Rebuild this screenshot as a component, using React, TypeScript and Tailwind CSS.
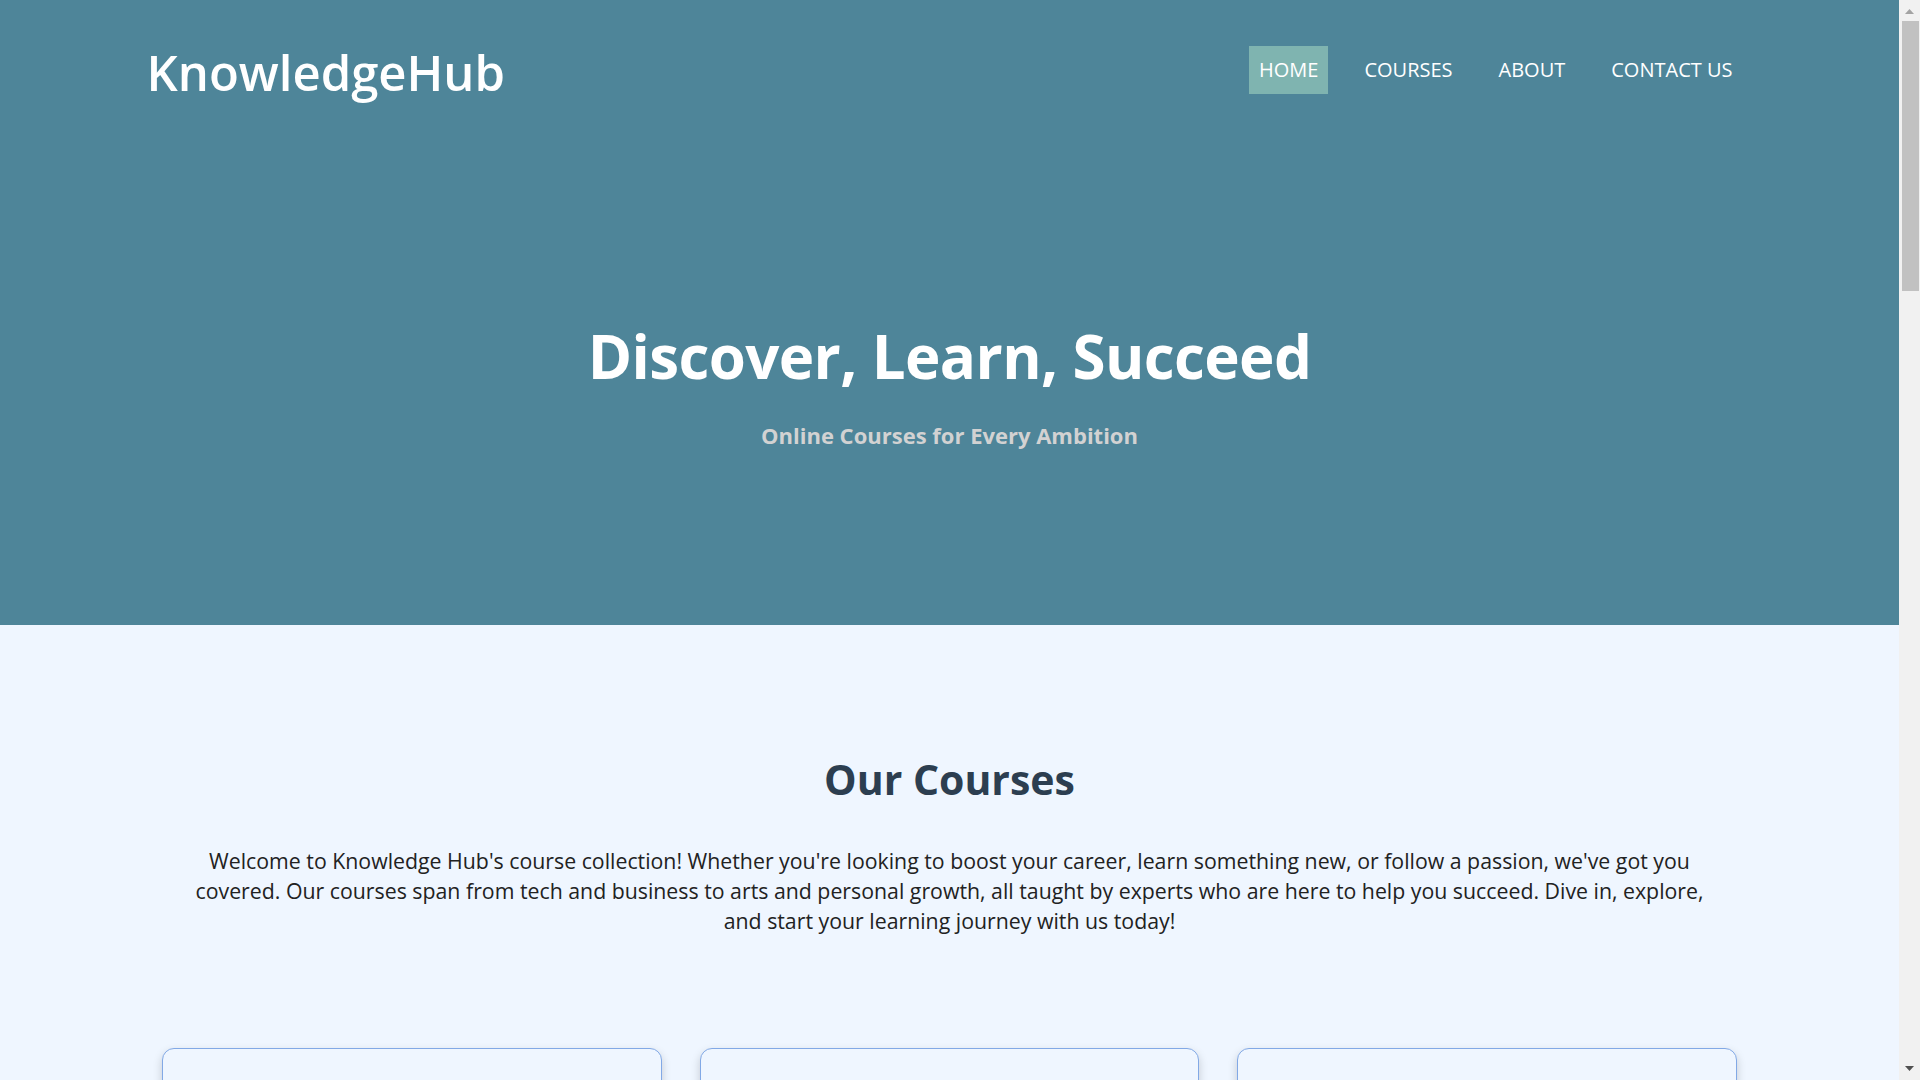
import React from "react";

const navLinks = ["HOME", "COURSES", "ABOUT", "CONTACT US"];

function Scrollbar() {
  return (
    <div className="w-[21px] h-screen shrink-0 bg-[#f1f1f1] flex flex-col items-center">
      <svg className="mt-[9px]" width="9" height="5" viewBox="0 0 9 5">
        <path d="M4.5 0 L9 5 L0 5 Z" fill="#a3a3a3" />
      </svg>
      <div className="mt-[7px] ml-[1px] w-[17px] h-[270px] bg-[#c1c1c1]" />
      <div className="flex-1" />
      <svg className="mb-[9px]" width="9" height="5" viewBox="0 0 9 5">
        <path d="M0 0 L9 0 L4.5 5 Z" fill="#505050" />
      </svg>
    </div>
  );
}

export default function App() {
  return (
    <div className="h-screen flex overflow-hidden font-['Open_Sans',sans-serif]">
      <main className="flex-1 overflow-hidden bg-[#eff6ff]">
        <section className="bg-[#4e8599] h-[625px] flex flex-col">
          <header className="w-[1600px] mx-auto flex justify-between items-center pt-[36px]">
            <h1 className="text-[49px] font-semibold text-white leading-[64px] -ml-[3px] mt-[4px]">
              KnowledgeHub
            </h1>
            <ul className="flex items-center gap-[26px] mr-[7px]">
              {navLinks.map((link, i) => (
                <li key={link}>
                  <a
                    href="#"
                    className={
                      i === 0
                        ? "block px-[10px] py-[10px] text-[20px] leading-[28px] text-white bg-[#7fb4b0]"
                        : "block px-[10px] py-[10px] text-[20px] leading-[28px] text-white"
                    }
                  >
                    {link}
                  </a>
                </li>
              ))}
            </ul>
          </header>

          <div className="flex flex-col items-center mt-[212px]">
            <h2 className="text-[60px] font-bold text-white leading-[80px] tracking-[-0.01em]">
              Discover, Learn, Succeed
            </h2>
            <p className="mt-[23px] text-[22px] leading-[33px] font-bold text-[#d2d2d2]">
              Online Courses for Every Ambition
            </p>
          </div>
        </section>

        <section className="pt-[128px] pb-20">
          <h2 className="text-center text-[41px] font-bold text-[#2c3e50] leading-[52px]">
            Our Courses
          </h2>
          <p className="w-[1515px] mx-auto mt-[41px] text-center text-[21.3px] leading-[30px] text-[#222]">
            Welcome to Knowledge Hub's course collection! Whether you're looking
            to boost your career, learn something new, or follow a passion,
            we've got you covered. Our courses span from tech and business to
            arts and personal growth, all taught by experts who are here to help
            you succeed. Dive in, explore, and start your learning journey with
            us today!
          </p>

          <div className="w-[1575px] mx-auto mt-[112px] grid grid-cols-3 gap-[38px]">
            {[0, 1, 2].map((c) => (
              <div
                key={c}
                className="h-[420px] rounded-[12px] border border-[#82a9e6] bg-[#eff6ff] shadow-[0_4px_10px_rgba(0,0,0,0.18)]"
              />
            ))}
          </div>
        </section>
      </main>
      <Scrollbar />
    </div>
  );
}
